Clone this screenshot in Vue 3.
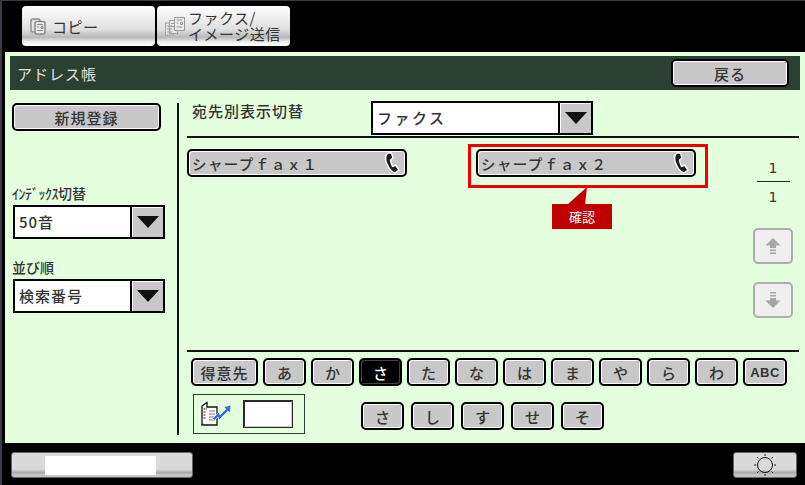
<template>
  <div class="screen">
    <div class="tabs">
      <button class="tab">
        <svg class="tab-icon" width="16" height="17" viewBox="0 0 16 17">
          <rect x="1" y="1" width="9" height="13" rx="2" fill="#e4e4e4" stroke="#8f8f8f" stroke-width="1.500" />
          <rect x="5" y="3.500" width="10" height="12.500" rx="2" fill="#e8e8e8" stroke="#8a8a8a" stroke-width="1.500" />
          <path d="M7 6.500h6M7 9h2M11 8.500h2v2h-2zM7 12.500h6" stroke="#8a8a8a" fill="none" />
        </svg>
        <span>コピー</span>
      </button>
      <button class="tab tab-fax">
        <svg class="tab-icon" width="20" height="19" viewBox="0 0 20 19">
          <rect x=".5" y="6" width="8" height="12" fill="#e6e6e6" stroke="#a2a2a2" />
          <rect x="4.500" y="3.500" width="8" height="13" fill="#e6e6e6" stroke="#a2a2a2" />
          <rect x="9.500" y=".5" width="10" height="13" fill="#ececec" stroke="#9a9a9a" />
          <path d="M2 9h5M2 12h5M2 15h5M6 6.500h3M6 9.500h3M11.500 3h6M11.500 6h2M15.500 5.500h2v2h-2zM11.500 10h6" stroke="#999" fill="none" />
        </svg>
        <span class="tab-label">ファクス/<br />イメージ送信</span>
      </button>
    </div>

    <main class="panel">
      <header class="title-bar">
        <h1>アドレス帳</h1>
        <button class="btn back-btn">戻る</button>
      </header>

      <div class="content">
        <aside class="side">
          <button class="btn new-btn">新規登録</button>
          <label class="side-label index-label"><span class="narrow">ｲﾝﾃﾞｯｸｽ</span>切替</label>
          <div class="select side-select">
            <span class="select-value">50音</span>
            <span class="select-arrow"><i></i></span>
          </div>
          <label class="side-label order-label">並び順</label>
          <div class="select side-select">
            <span class="select-value">検索番号</span>
            <span class="select-arrow"><i></i></span>
          </div>
        </aside>

        <section class="main">
          <div class="dest-row">
            <span class="dest-label">宛先別表示切替</span>
            <div class="select dest-select">
              <span class="select-value spaced">ファクス</span>
              <span class="select-arrow"><i></i></span>
            </div>
          </div>

          <div class="list-area">
            <div class="entries">
              <button v-for="name in entries" :key="name" class="btn entry">
                <span>{{ name }}</span>
                <svg width="16" height="22" viewBox="0 0 16 22">
                  <path d="M4 1C1 3 1 8 3 12c2 5 5 8 8 9l4-3-3.500-5-3 1.500C7.500 12 6.500 10 6.500 8L9 6 7.500 1z" fill="#1c1c1c" stroke="#fff" stroke-width="1.400" stroke-linejoin="round" />
                </svg>
              </button>
            </div>
            <div class="pager">
              <div class="page-count">
                <span>1</span>
                <hr />
                <span>1</span>
              </div>
              <button class="scroll-btn">
                <svg width="16" height="18" viewBox="0 0 16 18">
                  <path d="M8 1l7.500 7.500H11V11H5V8.500H.5zM5 12.500h6V14H5zM5 15.500h6V17H5z" fill="#a6a6a6" />
                </svg>
              </button>
              <button class="scroll-btn">
                <svg width="16" height="18" viewBox="0 0 16 18">
                  <path d="M8 17L.5 9.500H5V7h6v2.500h4.500zM5 4h6v1.500H5zM5 1h6v1.500H5z" fill="#a6a6a6" />
                </svg>
              </button>
            </div>
          </div>

          <div class="kana-area">
            <div class="kana-row">
              <button class="btn kana wide">得意先</button>
              <button v-for="k in kanaRow" :key="k" class="btn kana" :class="{ active: k === 'さ' }">{{ k }}</button>
              <button class="btn kana abc">ABC</button>
            </div>
            <div class="search-row">
              <div class="jump-box">
                <svg width="32" height="26" viewBox="0 0 32 26">
                  <path d="M2 5l5-3.500V21l-5 3z" fill="#fff" stroke="#111" stroke-width="1.300" />
                  <path d="M7 6h10v18H3" fill="#fff" stroke="#111" stroke-width="1.300" />
                  <path d="M3.500 8h2M3.500 11h2M3.500 14h2M3.500 17h2" stroke="#111" />
                  <path d="M9 10h6M9 13h6M9 16h6M9 19h6" stroke="#777" />
                  <path d="M12 18l7-7 1 3 6-6-2-2 7-2-1 8-2-2-9 9-1-3-3 3z" fill="#2f6fe0" stroke="#fff" stroke-width=".6" />
                </svg>
                <div class="jump-input"></div>
              </div>
              <div class="sub-kana">
                <button v-for="k in subKana" :key="k" class="btn kana">{{ k }}</button>
              </div>
            </div>
          </div>
        </section>
      </div>

      <div class="highlight"></div>
      <div class="callout">確認</div>
      <svg class="callout-tail" width="24" height="18" viewBox="0 0 24 18">
        <path d="M20 0L0 18h18z" fill="#c00000" />
      </svg>
    </main>

    <footer class="bottom">
      <div class="job-btn"><div class="job-window"></div></div>
      <button class="sun-btn">
        <svg width="24" height="24" viewBox="0 0 24 24">
          <circle cx="12" cy="12" r="7.500" fill="none" stroke="#111" />
          <path d="M12 1v2M12 21v2M1 12h2M21 12h2M4 4l1.500 1.500M20 4l-1.500 1.500M4 20l1.500-1.500M20 20l-1.500-1.500" stroke="#111" />
        </svg>
      </button>
    </footer>
  </div>
</template>

<script setup>
const entries = ['シャープｆａｘ１', 'シャープｆａｘ２']
const kanaRow = ['あ', 'か', 'さ', 'た', 'な', 'は', 'ま', 'や', 'ら', 'わ']
const subKana = ['さ', 'し', 'す', 'せ', 'そ']
</script>

<style>
html,
body {
  margin: 0;
  background: #000;
}
</style>

<style scoped>
.screen {
  width: 805px;
  height: 485px;
  box-sizing: border-box;
  background: #000;
  border-left: 2px solid #3b3b46;
  border-top: 1px solid #3b3b46;
  padding-left: 3px;
  font-family: "Noto Sans CJK JP", "Liberation Sans", sans-serif;
  color: #333;
  overflow: hidden;
}
button {
  font-family: inherit;
  padding: 0;
  margin: 0;
  cursor: pointer;
}

.tabs {
  height: 51px;
  box-sizing: border-box;
  padding: 5px 0 0 17px;
  display: flex;
  gap: 2px;
}
.tab {
  width: 133px;
  height: 40px;
  border: 0;
  border-radius: 4px;
  background: linear-gradient(#fff 0, #f4f4f4 20%, #dedede 60%, #b8b8b8 78%, #efefef 90%, #fff 100%);
  display: flex;
  align-items: center;
  gap: 6px;
  padding-left: 8px;
  font-size: 15px;
  letter-spacing: 0.500px;
  color: #333;
}
.tab-fax {
  padding-left: 8px;
  gap: 3px;
  letter-spacing: 0;
}
.tab-icon {
  flex: none;
}
.tab-label {
  text-align: left;
  line-height: 16px;
  font-size: 15px;
  letter-spacing: 0.500px;
  white-space: nowrap;
}

.panel {
  position: relative;
  height: 391px;
  width: 800px;
  box-sizing: border-box;
  background: #e3ffdd;
  padding: 4px 5px 0;
}
.title-bar {
  height: 34px;
  background: #2a4030;
  display: flex;
  align-items: center;
  justify-content: space-between;
  padding: 0 11px 0 7px;
}
.title-bar h1 {
  margin: 0;
  font-size: 15px;
  font-weight: 400;
  color: #e2e2e2;
  letter-spacing: 1px;
}

.btn {
  box-sizing: border-box;
  border: 2px solid #000;
  border-radius: 5px;
  background: #c8c8c8;
  box-shadow: inset 1px 1px 0 #fff, inset -1px -1px 0 #fff;
  color: #333;
  font-size: 15px;
  font-weight: 500;
}
.back-btn {
  width: 118px;
  height: 28px;
  letter-spacing: 1px;
}

.content {
  display: flex;
  height: 353px;
  margin-left: -5px;
}
.side {
  width: 174px;
  height: 332px;
  flex: none;
  box-sizing: border-box;
  margin-top: 13px;
  padding: 0 0 0 7px;
  border-right: 2px solid #111;
  display: flex;
  flex-direction: column;
  align-items: flex-start;
}
.new-btn {
  width: 149px;
  height: 28px;
  letter-spacing: 1px;
}
.side-label {
  font-size: 14px;
  line-height: 18px;
  font-weight: 500;
  color: #333;
}
.narrow {
  letter-spacing: -0.500px;
}
.index-label {
  margin-top: 53px;
}
.order-label {
  margin-top: 19px;
}
.select {
  display: flex;
  box-sizing: border-box;
  height: 34px;
  border: 2px solid #000;
  background: #fff;
}
.side-select {
  width: 152px;
  margin-top: 3px;
  margin-left: 1px;
}
.select-value {
  flex: 1;
  font-size: 15px;
  line-height: 30px;
  padding-left: 4px;
  letter-spacing: 1px;
  font-weight: 500;
  color: #333;
}
.select-value.spaced {
  letter-spacing: 2.500px;
}
.select-arrow {
  width: 33px;
  flex: none;
  box-sizing: border-box;
  border-left: 2px solid #000;
  background: #c8c8c8;
  box-shadow: inset 1px 1px 0 #fff;
  display: flex;
  align-items: center;
  justify-content: center;
}
.select-arrow i {
  width: 0;
  height: 0;
  border-left: 11px solid transparent;
  border-right: 11px solid transparent;
  border-top: 12px solid #111;
}

.main {
  flex: 1;
  min-width: 0;
  margin-left: 8px;
  margin-right: 1px;
  display: flex;
  flex-direction: column;
}
.dest-row {
  height: 48px;
  box-sizing: border-box;
  padding: 11px 0 0 5px;
  display: flex;
  align-items: flex-start;
  border-bottom: 2px solid #111;
}
.dest-label {
  width: 179px;
  font-size: 15px;
  line-height: 20px;
  letter-spacing: 1px;
  font-weight: 500;
}
.dest-select {
  width: 222px;
}

.list-area {
  height: 212px;
  display: flex;
  justify-content: space-between;
  border-bottom: 2px solid #111;
}
.entries {
  display: flex;
  gap: 69px;
  padding-top: 11px;
  align-items: flex-start;
}
.entry {
  width: 220px;
  height: 28px;
  display: flex;
  align-items: center;
  justify-content: space-between;
  padding: 0 5px 0 3px;
  font-size: 14.500px;
  letter-spacing: 1.400px;
}
.pager {
  width: 46px;
  margin-right: 3px;
  display: flex;
  flex-direction: column;
  align-items: center;
}
.page-count {
  width: 33px;
  margin-top: 22px;
  display: flex;
  flex-direction: column;
  align-items: center;
  font-family: "DejaVu Sans", sans-serif;
  font-size: 14px;
  line-height: 16px;
  color: #333;
}
.page-count hr {
  width: 100%;
  margin: 5px 0 7px;
  border: 0;
  border-top: 1px solid #222;
}
.scroll-btn {
  width: 40px;
  height: 36px;
  box-sizing: border-box;
  border: 2px solid #adadad;
  border-radius: 5px;
  background: #efefef;
  display: flex;
  align-items: center;
  justify-content: center;
  margin-top: 18px;
}
.page-count + .scroll-btn {
  margin-top: 23px;
}

.kana-area {
  padding: 6px 0 0 4px;
}
.kana-row {
  display: flex;
  gap: 5px;
}
.kana {
  width: 43px;
  height: 28px;
  font-size: 15px;
  line-height: 1;
}
.kana.wide {
  width: 67px;
  letter-spacing: 1px;
}
.kana.abc {
  width: 44px;
  font-family: "Liberation Sans", sans-serif;
  font-size: 13px;
  font-weight: 700;
  letter-spacing: 0.500px;
}
.kana.active {
  background: #000;
  border-color: #000;
  box-shadow: inset 1px 1px 0 #444, inset -1px -1px 0 #444;
  color: #fff;
}
.search-row {
  display: flex;
  align-items: flex-start;
  padding: 8px 0 0 2px;
}
.jump-box {
  width: 112px;
  height: 40px;
  box-sizing: border-box;
  border: 1px solid #2a4030;
  display: flex;
  align-items: center;
  padding-left: 6px;
  gap: 11px;
}
.jump-input {
  width: 50px;
  height: 28px;
  box-sizing: border-box;
  border: 2px solid;
  border-color: #2a2a2a #c8c8c8 #c8c8c8 #2a2a2a;
  background: #fff;
  outline: 1px solid #2a2a2a;
  outline-offset: -1px;
}
.sub-kana {
  display: flex;
  gap: 7px;
  margin: 8px 0 0 56px;
}

.bottom {
  height: 42px;
  display: flex;
  align-items: flex-start;
  justify-content: space-between;
  padding: 9px 8px 0 6px;
}
.job-btn {
  width: 182px;
  height: 26px;
  box-sizing: border-box;
  border: 1px solid #666;
  border-radius: 3px;
  background: linear-gradient(#dadada 0, #dadada 68%, #a8a8a8 82%, #c4c4c4 90%, #c4c4c4 100%);
  padding: 3px 0 0 33px;
}
.job-window {
  width: 111px;
  height: 19px;
  background: #fff;
}
.sun-btn {
  width: 64px;
  height: 26px;
  box-sizing: border-box;
  border: 1px solid #666;
  border-radius: 3px;
  background: linear-gradient(#dadada 0, #dadada 68%, #a8a8a8 82%, #c4c4c4 90%, #c4c4c4 100%);
  display: flex;
  align-items: center;
  justify-content: center;
}

/* annotation drawn on top of the screen */
.highlight {
  position: absolute;
  left: 463px;
  top: 92px;
  width: 240px;
  height: 44px;
  box-sizing: border-box;
  border: 3px solid #f00000;
}
.callout {
  position: absolute;
  left: 547px;
  top: 152px;
  width: 60px;
  height: 25px;
  background: #c00000;
  color: #fff;
  font-size: 13px;
  line-height: 25px;
  text-align: center;
}
.callout-tail {
  position: absolute;
  left: 562px;
  top: 135px;
}
</style>
